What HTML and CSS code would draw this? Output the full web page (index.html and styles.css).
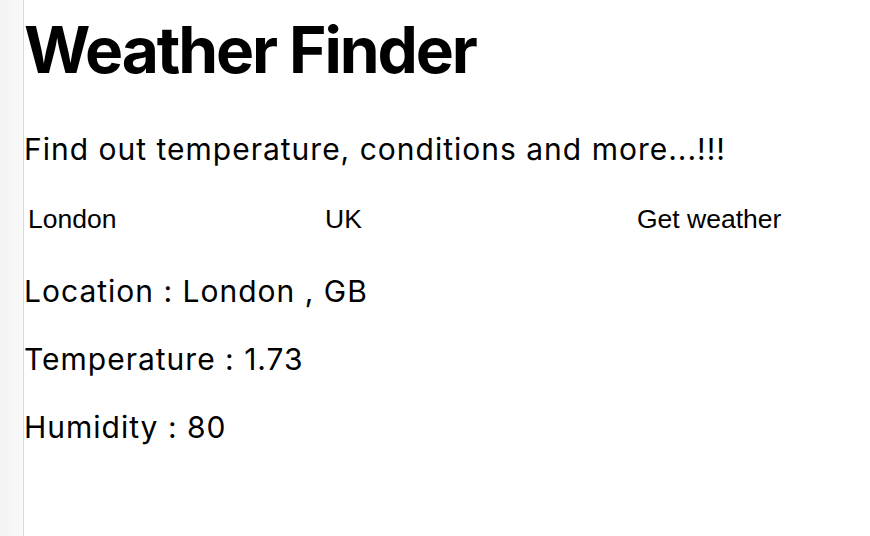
FILE: index.html
```html
<!DOCTYPE html>
<html>
<head>
<meta charset="utf-8">
<link rel="stylesheet" href="styles.css">
</head>
<body>
<div class="sidebar"></div>
<main class="content">
  <h1 class="title">Weather Finder</h1>
  <p class="subtitle">Find out temperature, conditions and more...!!!</p>
  <form class="search">
    <input class="field" type="text" value="London">
    <input class="field" type="text" value="UK">
    <button class="btn" type="button">Get weather</button>
  </form>
  <p class="info">Location : London , GB</p>
  <p class="info">Temperature : 1.73</p>
  <p class="info">Humidity : 80</p>
</main>
</body>
</html>
```
FILE: styles.css
```css
html, body {
  margin: 0;
  padding: 0;
  height: 100%;
  background: #fff;
}
body {
  display: flex;
  font-family: Inter, "Noto Sans", sans-serif;
  color: #000;
}
.sidebar {
  width: 23px;
  flex: none;
  background: linear-gradient(to right, #f4f4f4, #f8f8f8);
  border-right: 1px solid #dadada;
}
.content {
  flex: 1;
}
.title {
  margin: 12px 0 0;
  font-size: 64px;
  font-weight: 700;
  line-height: 76px;
  letter-spacing: -2.1px;
}
.subtitle {
  margin: 41px 0 0;
  font-size: 30px;
  line-height: 40px;
  letter-spacing: 1px;
}
.search {
  display: flex;
  margin-top: 30px;
  height: 40px;
  align-items: center;
}
.field {
  width: 293px;
  border: none;
  outline: none;
  background: transparent;
  padding: 0 0 0 4px;
  margin: 0;
  font-family: "Liberation Sans", Arial, sans-serif;
  font-size: 26.5px;
  color: #000;
}
.btn {
  border: none;
  background: transparent;
  padding: 0 0 0 19px;
  margin: 0;
  font-family: "Liberation Sans", Arial, sans-serif;
  font-size: 26.5px;
  color: #000;
}
.info {
  margin: 28px 0 0;
  font-size: 30px;
  line-height: 40px;
  letter-spacing: 1px;
}
.search + .info {
  margin-top: 32px;
}
```
